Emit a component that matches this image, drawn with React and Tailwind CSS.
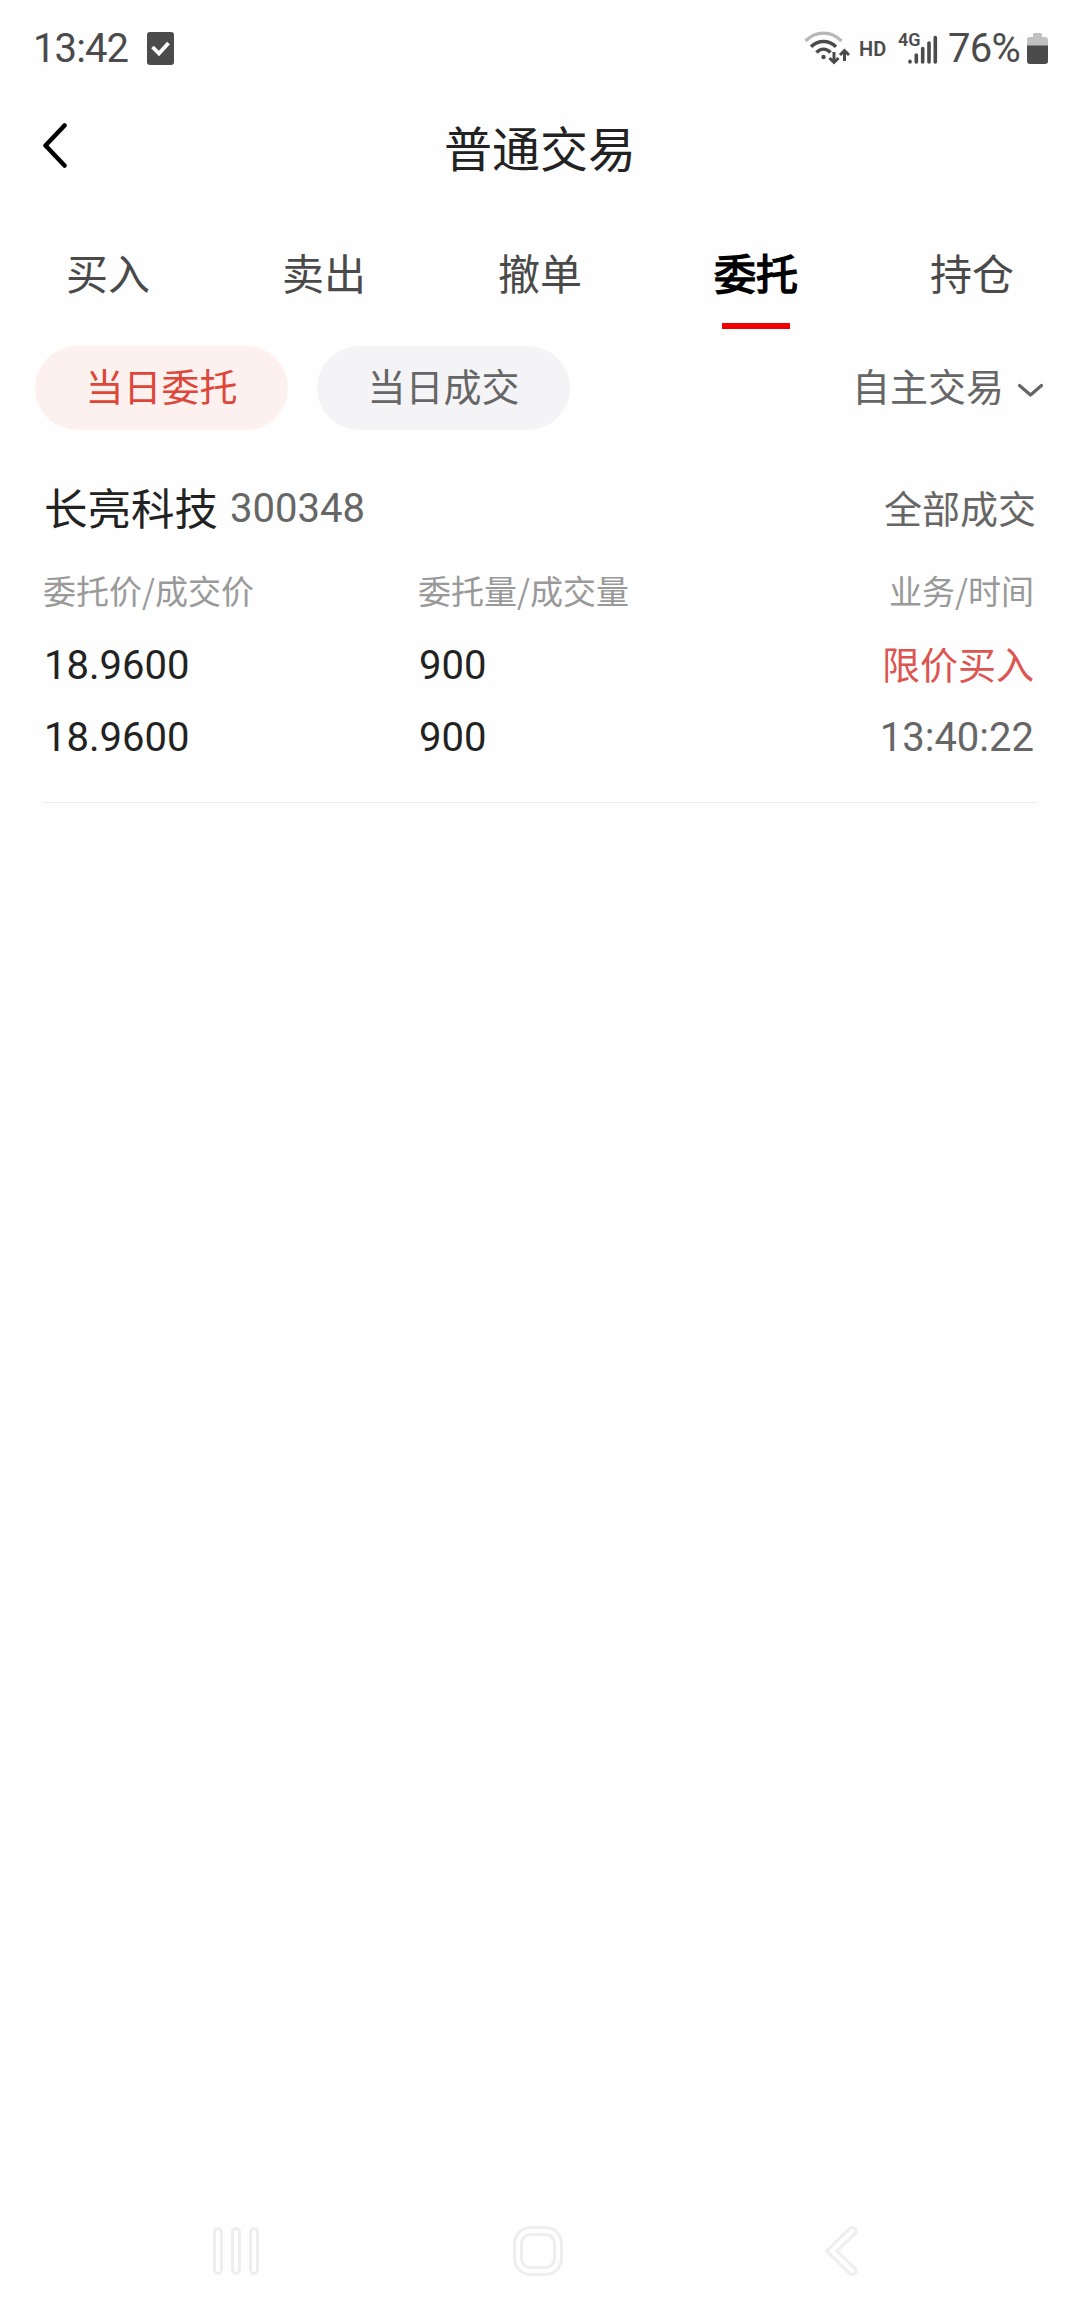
import clsx from "clsx";

const tabs = ["买入", "卖出", "撤单", "委托", "持仓"];

const order = {
  name: "长亮科技",
  code: "300348",
  status: "全部成交",
  rows: [
    { price: "18.9600", qty: "900" },
    { price: "18.9600", qty: "900" },
  ],
  action: "限价买入",
  time: "13:40:22",
};

function WifiIcon() {
  return (
    <svg width="46" height="34" viewBox="0 0 46 34" fill="none">
      <path d="M1.500 10C12 -0.500 27 -0.500 37.500 10" stroke="#b8b8b8" strokeWidth="3.200" />
      <path d="M7 15.800C14 8.800 25 8.800 32 15.800" stroke="#4b4b4b" strokeWidth="3.400" />
      <path d="M12.500 21.500C16.500 17 22.500 17 26.500 21.500" stroke="#4b4b4b" strokeWidth="3.400" />
      <circle cx="19.500" cy="26" r="2.200" fill="#4b4b4b" />
      <g stroke="#4b4b4b" strokeWidth="3">
        <path d="M30 21v10.500M25.500 27l4.500 4.500 4.500-4.500" />
        <path d="M40.500 30V19.500M36 24l4.500-4.500 4.500 4.500" />
      </g>
    </svg>
  );
}

function SignalIcon() {
  return (
    <svg width="30" height="30" viewBox="0 0 30 30" stroke="#4b4b4b" strokeWidth="3.600" strokeLinecap="round">
      <path d="M2 27v-0.600M8.300 27v-7M14.700 27v-13.500M21 27V8M27.300 27V2.500" />
    </svg>
  );
}

function StatusBar() {
  return (
    <div className="flex h-24 items-center justify-between pl-[33px] pr-8 font-[Roboto,sans-serif] text-[#4b4b4b]">
      <div className="flex items-center">
        <span className="w-[114px] pt-[2px] text-[40px] leading-none tracking-[-0.900px]">13:42</span>
        <svg width="27" height="33" viewBox="0 0 27 33" fill="none">
          <rect width="27" height="33" rx="3" fill="#4b4b4b" />
          <path d="M5.500 15l6.500 6.500L21.500 11" stroke="#fff" strokeWidth="3.800" />
        </svg>
      </div>
      <div className="flex items-center">
        <WifiIcon />
        <span className="ml-[9px] w-[39px] pt-[2px] text-[20px] font-semibold leading-none">HD</span>
        <div className="relative flex h-[33px] w-[40px] items-end justify-end">
          <span className="absolute -top-px left-0 text-[18px] font-semibold leading-none">4G</span>
          <SignalIcon />
        </div>
        <span className="ml-[10px] w-[79px] pt-[2px] text-[40px] leading-none tracking-[-0.700px]">76%</span>
        <svg width="21" height="31" viewBox="0 0 21 31" fill="none">
          <path d="M6 4V1.500Q6 0 7.500 0h6Q15 0 15 1.500V4h3q3 0 3 3v6H0V7q0-3 3-3z" fill="#c0c0c0" />
          <path d="M0 12.500h21V28q0 3-3 3H3q-3 0-3-3z" fill="#4b4b4b" />
        </svg>
      </div>
    </div>
  );
}

function Header() {
  return (
    <header className="grid h-[98px] grid-cols-[1fr_auto_1fr] items-center">
      <svg className="ml-[42px]" width="25" height="47" viewBox="0 0 25 47" fill="none">
        <path d="M22.500 3.500L3.500 23.500l19 20" stroke="#000" strokeWidth="4.500" strokeLinecap="round" strokeLinejoin="round" />
      </svg>
      <h1 className="pt-[2px] text-[48px] leading-[60px] text-[#222]">普通交易</h1>
    </header>
  );
}

function Tabs({ active }) {
  return (
    <nav className="grid grid-cols-5 pt-12">
      {tabs.map((t) => (
        <div key={t} className="flex flex-col items-center">
          <span
            className={clsx(
              "text-[42px] leading-[60px]",
              t === active
                ? "text-black [-webkit-text-stroke:1.500px_#000]"
                : "text-[#4a4a4a]"
            )}
          >
            {t}
          </span>
          <div className={clsx("mt-[21px] h-[6px] w-[68px]", t === active && "bg-[#f00000]")} />
        </div>
      ))}
    </nav>
  );
}

function Filters() {
  return (
    <div className="mt-[17px] flex items-center pl-[35px] pr-9 text-[38px] leading-[60px]">
      <div className="flex h-[84px] w-[253px] items-center justify-center rounded-full bg-[#fdf1ef] pb-[6px] text-[#dd4638]">
        当日委托
      </div>
      <div className="ml-[29px] flex h-[84px] w-[253px] items-center justify-center rounded-full bg-[#f4f4f7] pb-[6px] text-[#666]">
        当日成交
      </div>
      <div className="ml-auto flex items-center text-[#666]">
        <span className="pb-[6px]">自主交易</span>
        <svg className="ml-[13px] mt-1" width="27" height="15" viewBox="0 0 27 15" fill="none">
          <path d="M2.500 2.500l11 9.500 11-9.500" stroke="#666" strokeWidth="3.200" strokeLinecap="round" strokeLinejoin="round" />
        </svg>
      </div>
    </div>
  );
}

function OrderItem({ item }) {
  return (
    <section className="mx-[42px] mt-[47px] border-b border-[#ececec] pb-[34px]">
      <div className="flex h-[60px] items-center pl-[2px] pr-[2px]">
        <span className="text-[43.500px] text-[#222]">{item.name}</span>
        <span className="ml-3 pt-1 font-[Roboto,sans-serif] text-[40px] text-[#666]">
          {item.code}
        </span>
        <span className="ml-auto pb-[2px] text-[38px] text-[#666]">{item.status}</span>
      </div>

      <div className="mt-[31px] grid grid-cols-[375px_1fr_auto] pl-px pr-[4px] text-[33px] leading-[44px] text-[#999]">
        <span>委托价/成交价</span>
        <span>委托量/成交量</span>
        <span>业务/时间</span>
      </div>

      <div className="mt-6 flex flex-col gap-3">
        {item.rows.map((r, i) => (
          <div
            key={i}
            className="grid h-[60px] grid-cols-[375px_1fr_auto] items-center pl-[2px] pr-1 font-[Roboto,sans-serif] text-[40px] leading-[60px] text-[#222]"
          >
            <span>{r.price}</span>
            <span>{r.qty}</span>
            {i === 0 ? (
              <span className="pb-[6px] font-['Noto_Sans_CJK_SC',sans-serif] text-[38px] leading-[54px] text-[#dc5550]">
                {item.action}
              </span>
            ) : (
              <span className="text-[#666]">{item.time}</span>
            )}
          </div>
        ))}
      </div>
    </section>
  );
}

function NavBar() {
  return (
    <div className="mt-auto flex h-[90px] items-start pl-[212px]">
      <svg width="50" height="50" viewBox="0 0 50 50" fill="none" stroke="#eee" strokeWidth="3">
        <rect x="2.500" y="2.500" width="7" height="45" rx="3.500" />
        <rect x="20.500" y="2.500" width="7" height="45" rx="3.500" />
        <rect x="38.500" y="2.500" width="7" height="45" rx="3.500" />
      </svg>
      <svg className="ml-[251px]" width="50" height="50" viewBox="0 0 50 50" fill="none" stroke="#eee" strokeWidth="3">
        <rect x="1.500" y="1.500" width="47" height="47" rx="16" />
        <rect x="8.500" y="8.500" width="33" height="33" rx="9" />
      </svg>
      <svg className="ml-[261px]" width="34" height="50" viewBox="0 0 34 50" fill="none" stroke="#eee" strokeWidth="3">
        <path d="M2.500 25L25.500 2.700C29.500 -0.500 34 4 31 7.500L13 25l18 17.500C34 46 29.500 50.500 25.500 47.300z" />
      </svg>
    </div>
  );
}

export default function App() {
  return (
    <div className="flex h-[2316px] w-[1080px] flex-col bg-[#fefefe] font-['Noto_Sans_CJK_SC',sans-serif]">
      <StatusBar />
      <Header />
      <Tabs active="委托" />
      <Filters />
      <OrderItem item={order} />
      <NavBar />
    </div>
  );
}
